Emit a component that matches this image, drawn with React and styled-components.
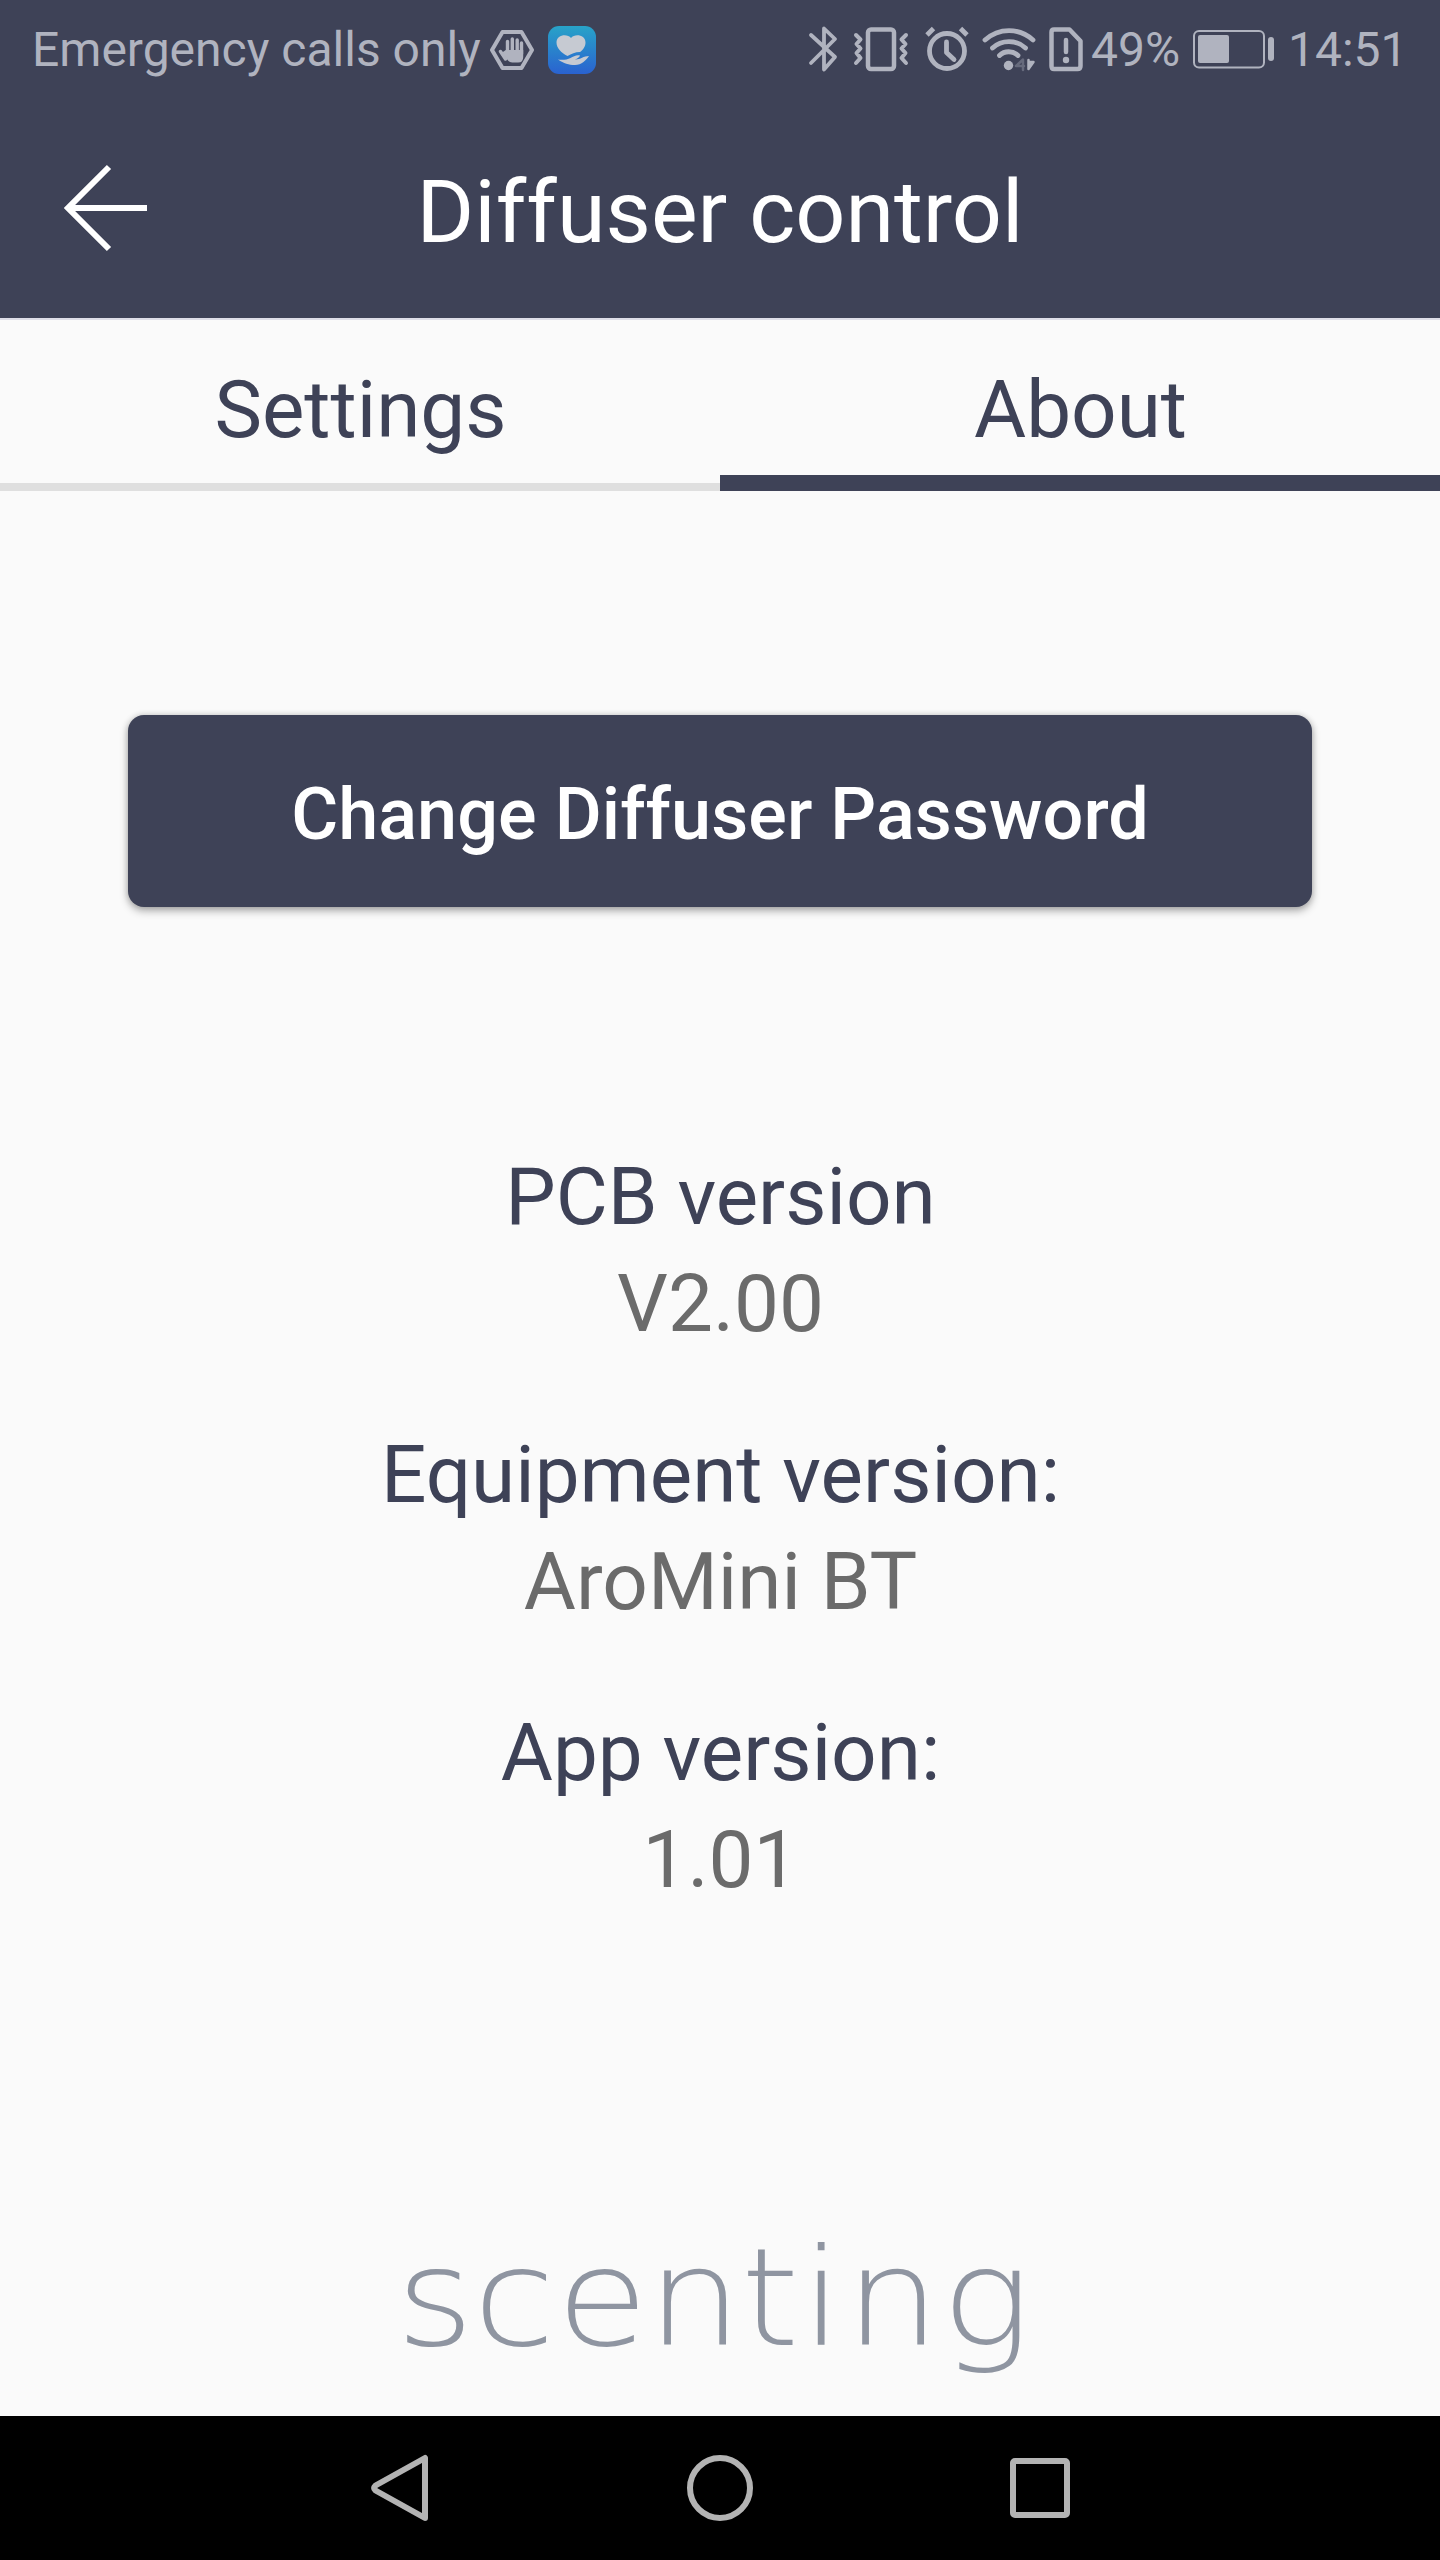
import React, { useState } from "react";
import styled, { createGlobalStyle } from "styled-components";

const navy = "#3e4257";
const statusGrey = "#b0b3bf";

const GlobalStyle = createGlobalStyle`
  body {
    margin: 0;
    background: #fafafa;
    font-family: Roboto, "Noto Sans", sans-serif;
  }
`;

const Screen = styled.div`
  display: flex;
  flex-direction: column;
  width: 1440px;
  height: 2560px;
  background: #fafafa;
`;

const StatusBar = styled.div`
  display: flex;
  justify-content: space-between;
  align-items: center;
  box-sizing: border-box;
  height: 98px;
  padding: 1px 36px 0 32px;
  background: ${navy};
  color: ${statusGrey};
`;

const StatusGroup = styled.div`
  display: flex;
  align-items: center;
`;

const StatusText = styled.span`
  font-size: 48px;
  line-height: 50px;
  white-space: nowrap;
  width: ${(p) => p.$width}px;
  margin-left: ${(p) => p.$gap || 0}px;
`;

const StatusIcon = styled.svg`
  display: block;
  flex: none;
  height: 48px;
  width: ${(p) => p.$width}px;
  margin-left: ${(p) => p.$gap || 0}px;
  fill: none;
  stroke: ${statusGrey};
  stroke-linecap: round;
  stroke-linejoin: round;
  overflow: visible;
`;

const Header = styled.header`
  display: grid;
  grid-template-columns: 200px 1fr 200px;
  align-items: center;
  height: 220px;
  background: ${navy};
  border-bottom: 2px solid #dedee8;
`;

const BackButton = styled.button`
  display: flex;
  justify-content: flex-start;
  padding: 0 0 1px 63px;
  border: 0;
  background: none;
`;

const Title = styled.h1`
  margin: 0;
  padding-top: 7px;
  color: #fff;
  font-size: 88px;
  font-weight: 400;
  line-height: 104px;
  text-align: center;
`;

const Tabs = styled.div`
  display: grid;
  grid-template-columns: 1fr 1fr;
  height: 171px;
`;

const Tab = styled.button`
  display: flex;
  flex-direction: column;
  justify-content: space-between;
  padding: 0;
  border: 0;
  background: none;
  color: ${navy};
  font-family: inherit;
  font-size: 80px;
  line-height: 94px;
  text-align: center;

  span {
    box-sizing: border-box;
    padding: 43px 0 0 1px;
    width: 100%;
  }

  &::after {
    content: "";
    width: 100%;
    height: ${(p) => (p.$active ? 16 : 8)}px;
    background: ${(p) => (p.$active ? navy : "#dfdfdf")};
  }
`;

const Content = styled.main`
  display: flex;
  flex: 1;
  flex-direction: column;
  align-items: center;
  padding-top: 224px;
`;

const PasswordButton = styled.button`
  width: 1184px;
  height: 192px;
  padding: 7px 0 0;
  border: 0;
  border-radius: 16px;
  background: ${navy};
  box-shadow: 0 4px 8px rgba(0, 0, 0, 0.3), 0 0 6px rgba(0, 0, 0, 0.16);
  color: #fff;
  font-family: inherit;
  font-size: 72px;
  font-weight: 500;
  letter-spacing: 0.05px;
`;

const VersionList = styled.dl`
  display: flex;
  flex-direction: column;
  gap: 64px;
  margin: 237px 0 0 1px;
  font-size: 80px;
  line-height: 107px;
  text-align: center;
`;

const Label = styled.dt`
  color: ${navy};
`;

const Value = styled.dd`
  margin: 0;
  color: #6b6b6b;
`;

const Brand = styled.svg`
  display: block;
  width: 640px;
  height: 160px;
  margin-top: 306px;
  overflow: visible;
  fill: #8f95a1;
  font-family: "DejaVu Sans", sans-serif;
  font-size: 136px;
  font-weight: 200;
  text-anchor: middle;
`;

const NavBar = styled.nav`
  display: flex;
  justify-content: center;
  align-items: center;
  gap: 240px;
  height: 144px;
  background: #000;
`;

const NavIcon = styled.svg`
  width: 80px;
  height: 80px;
  fill: none;
  stroke: #b3b3b3;
  stroke-width: 6;
  stroke-linejoin: round;
`;

const versions = [
  { label: "PCB version", value: "V2.00" },
  { label: "Equipment version:", value: "AroMini BT" },
  { label: "App version:", value: "1.01" },
];

const HandIcon = () => (
  <StatusIcon $width={44} $gap={8} viewBox="0 0 44 48" strokeWidth="4">
    <path d="M12.5 6h19L42 24 31.5 42h-19L2 24z" />
    <path
      d="M15.500 33 10.500 25.500M17.500 28V15.500M22.300 26V13M27.200 26V14M31.500 28V17"
      strokeWidth="3.400"
    />
    <path
      d="M15.800 24h17.400v7q0 5.500-5 5.500h-6q-3 0-5-3l-5-7z"
      fill={statusGrey}
      stroke="none"
    />
  </StatusIcon>
);

const HealthIcon = () => (
  <StatusIcon $width={48} $gap={14} viewBox="0 0 48 48">
    <defs>
      <linearGradient id="health" x1="0" y1="0" x2="0" y2="1">
        <stop offset="0" stopColor="#28a3c8" />
        <stop offset="1" stopColor="#2a62d0" />
      </linearGradient>
    </defs>
    <rect width="48" height="48" rx="11" fill="url(#health)" stroke="none" />
    <path
      d="M23 12c3.500-4.500 14.500-3.500 14.500 4.500 0 4-2.500 7.500-5.500 9.500-5 0-8.500 2-12.500 4C13 26.500 8.500 22 8.500 16.500 8.500 8.500 19.500 7.500 23 12z"
      fill="#c6cad2"
      stroke="none"
    />
    <path
      d="M10 33.500c4 .8 9 .3 12.500-1.500 3-1.500 6-3.500 9.500-2.500-.5 1.800-2.500 3-5 4 5 .3 8.500-3.500 14-3.500-2.500 4-7.500 9-14 9S16 37.500 10 33.500z"
      fill="#c6cad2"
      stroke="none"
    />
  </StatusIcon>
);

const BluetoothIcon = () => (
  <StatusIcon $width={28} viewBox="0 0 28 48" strokeWidth="3.800">
    <path d="M2 9l24 22-11 12.500V2.500L26 13 2 37" />
  </StatusIcon>
);

const VibrateIcon = () => (
  <StatusIcon $width={56} $gap={16} viewBox="0 0 56 48" strokeWidth="4.500">
    <rect x="15" y="3.500" width="26" height="39.500" rx="3" />
    <path
      d="M3 9l4.500 4.500L3.500 18l4 4.500-4 4.500 4 5L3 37M53 9l-4.500 4.500 4 4.500-4 4.500 4 4.500-4 5 4.500 5"
      strokeWidth="4"
    />
  </StatusIcon>
);

const AlarmIcon = () => (
  <StatusIcon $width={44} $gap={16} viewBox="0 0 44 48" strokeWidth="4.800">
    <circle cx="22" cy="25" r="17.500" />
    <path d="M21.500 16v10.500l7.500 7" />
    <path d="M2 9l6.500-6.500M42 9l-6.500-6.500" strokeLinecap="butt" />
  </StatusIcon>
);

const WifiIcon = () => (
  <StatusIcon $width={54} $gap={13} viewBox="0 0 54 48" strokeWidth="4.800">
    <path d="M3 14C17 1.500 37 1.500 51 14M10.500 22c9-8.500 24-8.500 33 0" />
    <path d="M17.500 29.500c5-5 13.500-5 18.500 0" />
    <circle cx="26.500" cy="39.500" r="4.700" fill={statusGrey} stroke="none" />
    <path d="M34 40l7-6.500V44M34 40h8" stroke="#666a7c" strokeWidth="2.500" />
    <path d="M46.500 34v9l5-7h-4" strokeWidth="2.500" fill={statusGrey} />
  </StatusIcon>
);

const SimIcon = () => (
  <StatusIcon $width={34} $gap={13} viewBox="0 0 34 48" strokeWidth="4.500">
    <path d="M5 3.500h15.500L31.500 15v25q0 3-3 3H5q-2.500 0-2.500-3V6q0-2.500 2.500-2.500z" />
    <path d="M17 14v12" />
    <circle cx="17" cy="34" r="3.200" fill={statusGrey} stroke="none" />
  </StatusIcon>
);

const BatteryIcon = () => (
  <StatusIcon $width={81} $gap={13} viewBox="0 0 81 48">
    <rect x="1" y="5" width="70" height="36.500" rx="5" strokeWidth="2" />
    <rect x="5" y="9" width="31" height="28" rx="2" fill={statusGrey} stroke="none" />
    <rect x="75" y="11" width="6" height="24" rx="3" fill={statusGrey} stroke="none" />
  </StatusIcon>
);

const App = () => {
  const [tab, setTab] = useState("About");

  return (
    <Screen>
      <GlobalStyle />
      <StatusBar>
        <StatusGroup>
          <StatusText $width={450}>Emergency calls only</StatusText>
          <HandIcon />
          <HealthIcon />
        </StatusGroup>
        <StatusGroup>
          <BluetoothIcon />
          <VibrateIcon />
          <AlarmIcon />
          <WifiIcon />
          <SimIcon />
          <StatusText $width={89} $gap={8}>49%</StatusText>
          <BatteryIcon />
          <StatusText $width={116} $gap={14}>14:51</StatusText>
        </StatusGroup>
      </StatusBar>

      <Header>
        <BackButton aria-label="Back">
          <svg width="84" height="90" viewBox="0 0 84 90" fill="none" stroke="#fff" strokeWidth="6">
            <path d="M46 4 5 45l41 41M5 45h79" />
          </svg>
        </BackButton>
        <Title>Diffuser control</Title>
      </Header>

      <Tabs>
        {["Settings", "About"].map((name) => (
          <Tab key={name} $active={tab === name} onClick={() => setTab(name)}>
            <span>{name}</span>
          </Tab>
        ))}
      </Tabs>

      <Content>
        <PasswordButton>Change Diffuser Password</PasswordButton>
        <VersionList>
          {versions.map((item) => (
            <div key={item.label}>
              <Label>{item.label}</Label>
              <Value>{item.value}</Value>
            </div>
          ))}
        </VersionList>
        {/* wordmark is set wide, one x per letter */}
        <Brand viewBox="400 0 640 160">
          <text
            transform="scale(1.1 1)"
            x="395.500 467.500 547.500 631.500 700 747 811.500 896.500"
            y="125"
          >
            scenting
          </text>
        </Brand>
      </Content>

      <NavBar>
        <NavIcon viewBox="0 0 80 80">
          <path d="M65 10v60L15.500 42.500q-2.500-2.500 0-5z" />
        </NavIcon>
        <NavIcon viewBox="0 0 80 80">
          <circle cx="40" cy="40" r="30" />
        </NavIcon>
        <NavIcon viewBox="0 0 80 80">
          <rect x="13" y="13" width="54" height="54" rx="2" />
        </NavIcon>
      </NavBar>
    </Screen>
  );
};

export default App;
